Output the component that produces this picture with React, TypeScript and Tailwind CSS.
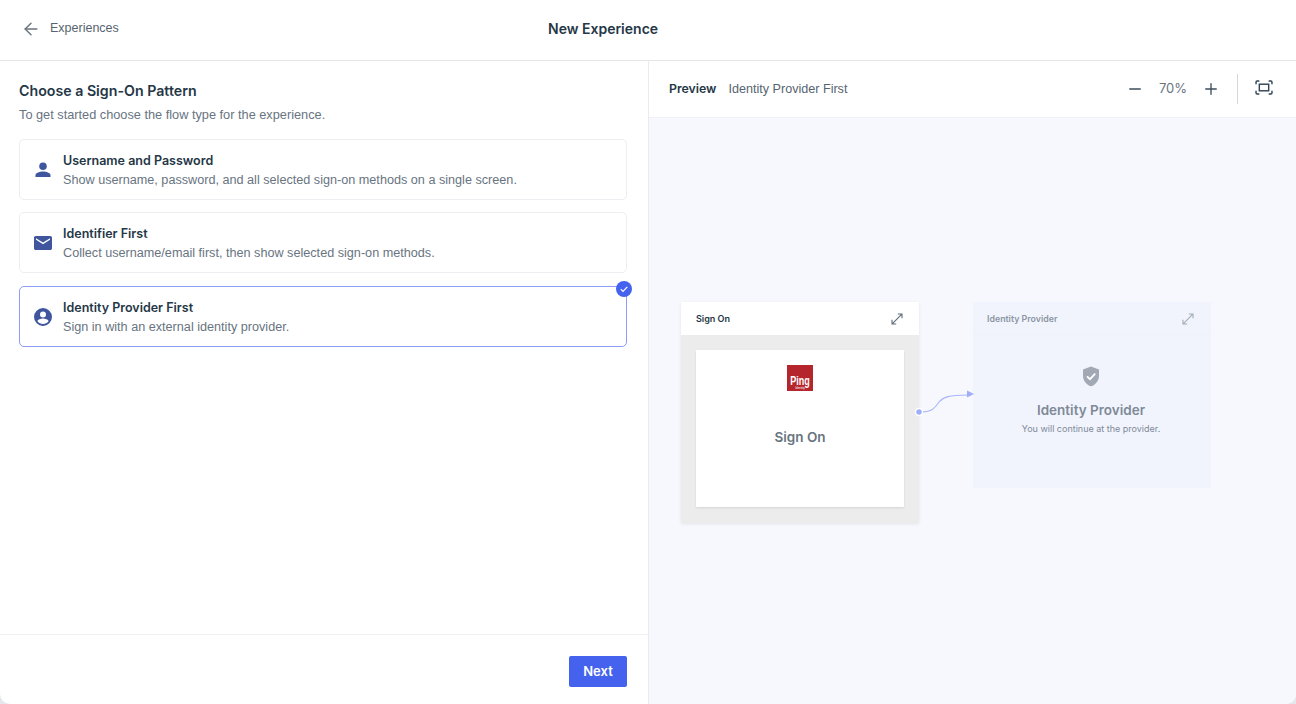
import React from 'react';
import { ArrowLeft, Minus, Plus } from 'lucide-react';

const patterns = [
  {
    title: 'Username and Password',
    description: 'Show username, password, and all selected sign-on methods on a single screen.',
    icon: 'user',
  },
  {
    title: 'Identifier First',
    description: 'Collect username/email first, then show selected sign-on methods.',
    icon: 'mail',
  },
  {
    title: 'Identity Provider First',
    description: 'Sign in with an external identity provider.',
    icon: 'account',
    selected: true,
  },
];

const PatternIcon: React.FC<{ name: string }> = ({ name }) => {
  if (name === 'user') {
    return (
      <svg width="24" height="24" viewBox="0 0 24 24" fill="#3f569f">
        <path d="M12 4.500a3.800 3.800 0 1 1 0 7.600 3.800 3.800 0 0 1 0-7.600zM12 13.600c3 0 7.500 1.300 7.500 3.400v2H4.500v-2c0-2.100 4.500-3.400 7.500-3.400z" />
      </svg>
    );
  }
  if (name === 'mail') {
    return (
      <svg width="24" height="24" viewBox="0 0 24 24" fill="#3f569f">
        <path d="M4.800 5h14.400c1 0 1.800.8 1.800 1.800v10.400c0 1-.8 1.800-1.800 1.800H4.800c-1 0-1.800-.8-1.800-1.800V6.800C3 5.800 3.800 5 4.800 5zM12 13.200l7-4.400V7.200l-7 4.400-7-4.400v1.600z" />
      </svg>
    );
  }
  return (
    <svg width="24" height="24" viewBox="0 0 24 24" fill="#3f569f">
      <path d="M12 3a9 9 0 1 1 0 18 9 9 0 0 1 0-18zm0 3.400a3 3 0 1 0 0 6 3 3 0 0 0 0-6zm0 12.500c2.200 0 4.200-1 5.500-2.700-.1-1.700-3.600-2.700-5.500-2.700s-5.400 1-5.500 2.700c1.300 1.700 3.300 2.700 5.500 2.700z" />
    </svg>
  );
};

const ExpandIcon: React.FC<{ color: string }> = ({ color }) => (
  <svg width="12" height="12" viewBox="0 0 12 12" fill="none" stroke={color} strokeWidth="1.100">
    <path d="M1.200 10.800 10.800 1.200M6.800 1h4.200v4.200M1 6.800V11h4.200" />
  </svg>
);

const App: React.FC = () => {
  return (
    <div className="w-[1296px] h-[704px] bg-[#e3e6ea]">
      <div className="w-full h-full bg-white rounded-b-[10px] flex flex-col overflow-hidden font-['Inter',sans-serif] text-[#253746]">
        <header className="h-[61px] flex-shrink-0 border-b border-[#e4e6ea] relative flex items-center pl-[21px]">
          <div className="flex items-center gap-[9px] -mt-[3px]">
            <ArrowLeft size={20} color="#68747f" strokeWidth={1.700} />
            <span className="text-[12.500px] text-[#57646f] font-['Liberation_Sans',sans-serif]">Experiences</span>
          </div>
          <div className="absolute left-[548px] top-[20px] text-[14px] leading-[18px] font-semibold">New Experience</div>
        </header>

        <div className="flex flex-1 min-h-0">
          <div className="w-[649px] flex-shrink-0 flex flex-col border-r border-[#e9ebf0]">
            <div className="flex-1 pt-[21px] pl-[19px] pr-[21px]">
              <h1 className="text-[14.200px] leading-[18px] font-semibold">Choose a Sign-On Pattern</h1>
              <p className="mt-[6px] text-[12.750px] leading-[18px] text-[#68747f] font-['Liberation_Sans',sans-serif]">To get started choose the flow type for the experience.</p>
              <div className="mt-[15px] flex flex-col gap-[12px]">
                {patterns.map((p) => (
                  <div
                    key={p.title}
                    className={`relative h-[61px] rounded-[5px] flex items-center pl-[11px] gap-[8px] ${p.selected ? 'mt-[1px] border-[1.5px] border-[#8d9df5]' : 'border border-[#eceef1]'}`}
                  >
                    <PatternIcon name={p.icon} />
                    <div className="pt-[1px]">
                      <div className="text-[12.500px] leading-[18px] font-semibold">{p.title}</div>
                      <div className="mt-[1px] text-[12.650px] leading-[18px] text-[#68747f] font-['Liberation_Sans',sans-serif]">{p.description}</div>
                    </div>
                    {p.selected && (
                      <div className="absolute -top-[6px] -right-[6px] w-[16px] h-[16px] rounded-full bg-[#4462ed] flex items-center justify-center">
                        <svg width="10" height="10" viewBox="0 0 10 10" fill="none" stroke="#fff" strokeWidth="1.200">
                          <path d="M1.800 5.200 4 7.400 8.300 2.800" />
                        </svg>
                      </div>
                    )}
                  </div>
                ))}
              </div>
            </div>
            <div className="h-[70px] flex-shrink-0 border-t border-[#eff0f3] flex items-center justify-end pr-[21px] pt-[4px]">
              <button className="w-[58px] h-[31px] rounded-[2px] bg-[#4462ed] text-white text-[13px] font-semibold">Next</button>
            </div>
          </div>

          <div className="flex-1 flex flex-col min-w-0">
            <div className="h-[57px] flex-shrink-0 border-b border-[#eff1f5] flex items-center pl-[20px] pr-[23px]">
              <span className="text-[12.300px] font-semibold">Preview</span>
              <span className="ml-[12px] text-[12.600px] text-[#57646f] font-['Liberation_Sans',sans-serif]">Identity Provider First</span>
              <div className="ml-auto flex items-center">
                <Minus size={18} color="#3d4d5c" strokeWidth={1.800} />
                <span className="w-[58px] text-center text-[13px] text-[#68747f]">70%</span>
                <Plus size={18} color="#3d4d5c" strokeWidth={1.800} />
                <div className="ml-[17px] w-px h-[30px] bg-[#d5d8dc]" />
                <svg className="ml-[17px] -mt-[4px]" width="18" height="15" viewBox="0 0 19 16" fill="none" stroke="#2f4152" strokeWidth="1.500">
                  <path d="M1 4.500V2.200C1 1.500 1.500 1 2.200 1h2.300M14.500 1h2.300c.7 0 1.200.5 1.200 1.200v2.300M18 11.500v2.300c0 .7-.5 1.200-1.200 1.200h-2.300M4.500 15H2.200C1.500 15 1 14.500 1 13.800v-2.300" />
                  <rect x="4.500" y="4.500" width="10" height="7" />
                </svg>
              </div>
            </div>

            <div className="relative flex-1 bg-[#f6f8fd]">
              <div className="absolute left-[32px] top-[184px] w-[238px] h-[221px] bg-[#ececec] shadow-[0_1px_3px_rgba(0,0,0,0.08)] flex flex-col">
                <div className="h-[33px] bg-white flex items-center justify-between pl-[15px] pr-[16px]">
                  <span className="text-[9px] font-semibold">Sign On</span>
                  <ExpandIcon color="#5f6c78" />
                </div>
                <div className="mx-[15px] mt-[15px] h-[157px] bg-white shadow-[0_1px_2px_rgba(0,0,0,0.1)] flex flex-col items-center">
                  <div className="mt-[15px] w-[26px] h-[26px] bg-[#b5252c] flex flex-col items-center justify-end pb-[1px] text-white font-['Liberation_Sans',sans-serif]">
                    <span className="text-[12px] font-bold leading-[11px] scale-x-[0.75]">Ping</span>
                    <span className="text-[3px] leading-[3px]">Identity</span>
                  </div>
                  <div className="mt-[37px] text-[13.500px] leading-[18px] font-semibold text-[#68747f]">Sign On</div>
                </div>
              </div>

              <svg className="absolute left-[265px] top-[269px]" width="65" height="30" viewBox="0 0 65 30" fill="none">
                <path d="M5 25c13 0 15-3 20-10 4-5 10-7 29-7" stroke="#a9b6fb" strokeWidth="1.100" />
                <circle cx="5" cy="25" r="3.500" fill="#a0aefa" stroke="#fff" strokeWidth="1.500" />
              </svg>

              <div className="absolute left-[324px] top-[184px] w-[238px] h-[186px] bg-[#f1f4fd] flex flex-col">
                <div className="h-[33px] flex-shrink-0 border-b border-[#eff2fb] flex items-center justify-between pt-[1px] pl-[14px] pr-[17px]">
                  <span className="text-[8.800px] font-semibold text-[#8c96a3]">Identity Provider</span>
                  <ExpandIcon color="#a3acb7" />
                </div>
                <div className="flex flex-col items-center pt-[31px] pr-[2px]">
                  <svg width="18" height="21" viewBox="0 0 18 21">
                    <path d="M9 0.500 17 3.400v6.300c0 4.800-3.300 9-8 10.600C4.300 18.700 1 14.500 1 9.700V3.400z" fill="#a2a9b4" />
                    <path d="M5 10.300 8 13.200 13.200 7.700" fill="none" stroke="#fff" strokeWidth="1.800" />
                  </svg>
                  <div className="mt-[14px] text-[13.500px] leading-[18px] font-semibold text-[#7f8a98]">Identity Provider</div>
                  <div className="mt-[3px] text-[9px] leading-[14px] text-[#7f8a98]">You will continue at the provider.</div>
                </div>
                {/* arrow tip sits on the card edge */}
                <svg className="absolute -left-[6px] top-[88px]" width="7" height="8" viewBox="0 0 7 8">
                  <path d="M7 4 0 .500v7z" fill="#a0aefa" />
                </svg>
              </div>
            </div>
          </div>
        </div>
      </div>
    </div>
  );
};

export default App;
